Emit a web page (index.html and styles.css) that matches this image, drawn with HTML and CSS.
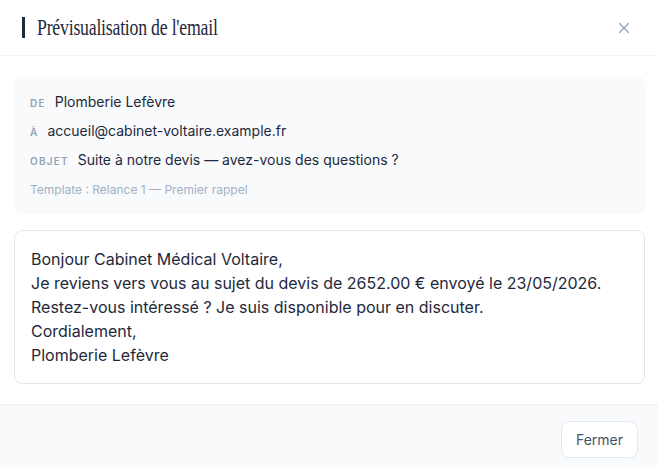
FILE: index.html
```html
<!DOCTYPE html>
<html lang="fr">
<head>
    <meta charset="UTF-8">
    <meta name="viewport" content="width=device-width, initial-scale=1.0">
    <title>Prévisualisation de l'email</title>
    <link rel="stylesheet" href="styles.css">
</head>
<body>
    <div class="modal">
        <header class="modal-header">
            <h2 class="modal-title"><span>Prévisualisation de l'email</span></h2>
            <button class="close-btn" aria-label="Fermer">
                <svg width="12" height="12" viewBox="0 0 12 12">
                    <path d="M1.5 1.5 L10.5 10.5 M10.5 1.5 L1.5 10.5" stroke="currentColor" stroke-width="1.4" stroke-linecap="round" fill="none"/>
                </svg>
            </button>
        </header>

        <div class="modal-body">
            <!-- Envelope infos -->
            <div class="meta">
                <div class="meta-row"><span class="meta-label">De</span><span class="meta-value">Plomberie Lefèvre</span></div>
                <div class="meta-row"><span class="meta-label">À</span><span class="meta-value">accueil@cabinet-voltaire.example.fr</span></div>
                <div class="meta-row"><span class="meta-label">Objet</span><span class="meta-value">Suite à notre devis — avez-vous des questions ?</span></div>
                <div class="meta-template">Template : Relance 1 — Premier rappel</div>
            </div>

            <!-- Message -->
            <div class="message">
                <p>Bonjour Cabinet Médical Voltaire,</p>
                <p>Je reviens vers vous au sujet du devis de 2652.00 € envoyé le 23/05/2026.</p>
                <p>Restez-vous intéressé ? Je suis disponible pour en discuter.</p>
                <p>Cordialement,</p>
                <p>Plomberie Lefèvre</p>
            </div>
        </div>

        <footer class="modal-footer">
            <button class="btn">Fermer</button>
        </footer>
    </div>
</body>
</html>
```

FILE: styles.css
```css
body {
    margin: 0;
    font-family: Inter, "Noto Sans", sans-serif;
    background: #fff;
    color: #1e293b;
}
.modal {
    width: 658px;
    height: 467px;
    display: flex;
    flex-direction: column;
    background: #fff;
}
.modal-header {
    height: 58px;
    box-sizing: border-box;
    border-bottom: 1px solid #f1f5f9;
    display: flex;
    align-items: center;
    justify-content: space-between;
    padding: 0 28px 0 22px;
}
.modal-title {
    margin: 0;
    border-left: 3px solid #1e293b;
    height: 21px;
    padding-left: 12px;
    display: flex;
    align-items: center;
    font-family: "Liberation Serif", serif;
    font-weight: normal;
    font-size: 24px;
    color: #1e293b;
    white-space: nowrap;
}
.modal-title span {
    display: inline-block;
    transform: scaleX(0.74);
    transform-origin: left center;
    letter-spacing: -0.3px;
}
.close-btn {
    background: none;
    border: none;
    padding: 0;
    color: #94a3b8;
    cursor: pointer;
    display: flex;
}
.modal-body {
    flex: 1;
    padding: 20px 13px 20px 14px;
    display: flex;
    flex-direction: column;
    gap: 16px;
}
.meta {
    background: #f8fafc;
    border-radius: 8px;
    padding: 16px 16px 16px;
    display: flex;
    flex-direction: column;
    gap: 8px;
}
.meta-row {
    display: flex;
    align-items: baseline;
    gap: 9px;
    font-size: 14px;
    line-height: 20px;
}
.meta-label {
    font-size: 10px;
    font-weight: 600;
    letter-spacing: 1.2px;
    text-transform: uppercase;
    color: #94a3b8;
}
.meta-value {
    color: #1e293b;
}
.meta-template {
    margin-top: 3px;
    font-size: 12px;
    line-height: 16px;
    color: #a3b1c4;
}
.message {
    border: 1px solid #e2e8f0;
    border-radius: 8px;
    padding: 16px;
    font-size: 16px;
    line-height: 24px;
    color: #1e293b;
}
.message p {
    margin: 0;
}
.modal-footer {
    border-top: 1px solid #eef2f6;
    background: #f8fafc;
    padding: 16px 20px 9px;
    display: flex;
    justify-content: flex-end;
}
.btn {
    font-family: Inter, "Noto Sans", sans-serif;
    font-size: 14px;
    color: #475569;
    background: #fff;
    border: 1px solid #e2e8f0;
    border-radius: 8px;
    height: 37px;
    padding: 0 14px;
    cursor: pointer;
}
```
